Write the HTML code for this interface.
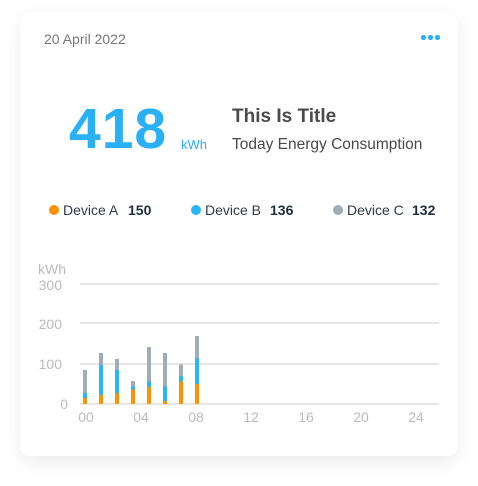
<!DOCTYPE html>
<html><head><style>
body{margin:0;width:478px;height:486px;background:#fff;font-family:"Liberation Sans",Arial,sans-serif;position:relative;overflow:hidden}
.card{position:absolute;left:20px;top:12px;width:438px;height:444px;background:#fff;border-radius:10px;box-shadow:0 6px 18px rgba(0,0,0,0.08)}
.t{position:absolute;white-space:nowrap}
.lg{position:absolute;top:202px;line-height:16px;font-size:14px;white-space:nowrap;color:#2f3a4a}
.lg b{color:#1f2d40;position:absolute;top:0}
.dot{position:absolute;width:10px;height:10px;border-radius:50%}
</style></head><body>
<div class="card"></div>
<div class="t" style="left:44px;top:31px;font-size:14px;color:#777">20 April 2022</div>
<div class="dot" style="left:421px;top:35px;width:4.5px;height:4.5px;background:#29b0f5"></div>
<div class="dot" style="left:428px;top:35px;width:4.5px;height:4.5px;background:#29b0f5"></div>
<div class="dot" style="left:435px;top:35px;width:4.5px;height:4.5px;background:#29b0f5"></div>
<div class="t" style="left:69px;top:96px;font-size:57px;font-weight:bold;color:#29b0f5;letter-spacing:1px">418</div>
<div class="t" style="left:181px;top:137px;font-size:13px;color:#29b0f5">kWh</div>
<div class="t" style="left:232px;top:106px;font-size:19px;font-weight:bold;color:#4a4a4a">This Is Title</div>
<div class="t" style="left:232px;top:136px;font-size:15.5px;color:#4a4a4a">Today Energy Consumption</div>
<div class="dot" style="left:49px;top:205px;background:#fb9305"></div>
<div class="lg" style="left:63px">Device A<b style="left:65px">150</b></div>
<div class="dot" style="left:191px;top:205px;background:#29b6f6"></div>
<div class="lg" style="left:205px">Device B<b style="left:65px">136</b></div>
<div class="dot" style="left:333px;top:205px;background:#a0acb8"></div>
<div class="lg" style="left:347px">Device C<b style="left:65px">132</b></div>
<svg width="478" height="486" style="position:absolute;left:0;top:0" font-family="Liberation Sans, Arial, sans-serif">
<g stroke="#ddd" stroke-width="1.5">
<line x1="80" x2="439" y1="284" y2="284"/><line x1="80" x2="439" y1="323" y2="323"/><line x1="80" x2="439" y1="364" y2="364"/><line x1="80" x2="439" y1="404" y2="404"/></g>
<g fill="#bbb" font-size="14">
<text x="38" y="274">kWh</text>
<g text-anchor="end"><text x="62" y="290">300</text><text x="62" y="329">200</text><text x="62" y="369">100</text><text x="68" y="409">0</text></g>
<g text-anchor="middle"><text x="86" y="422">00</text><text x="141" y="422">04</text><text x="196" y="422">08</text><text x="251" y="422">12</text><text x="306" y="422">16</text><text x="361" y="422">20</text><text x="416" y="422">24</text></g>
</g>
<g>
<rect x="83" y="370" width="4" height="34" fill="#a0acb8"/><rect x="83" y="393" width="4" height="11" fill="#29b6f6"/><rect x="83" y="398" width="4" height="6" fill="#fb9305"/>
<rect x="99" y="353" width="4" height="51" fill="#a0acb8"/><rect x="99" y="365" width="4" height="39" fill="#29b6f6"/><rect x="99" y="395" width="4" height="9" fill="#fb9305"/>
<rect x="115" y="359" width="4" height="45" fill="#a0acb8"/><rect x="115" y="370" width="4" height="34" fill="#29b6f6"/><rect x="115" y="393" width="4" height="11" fill="#fb9305"/>
<rect x="131" y="381" width="4" height="23" fill="#a0acb8"/><rect x="131" y="386.5" width="4" height="17.5" fill="#29b6f6"/><rect x="131" y="389.5" width="4" height="14.5" fill="#fb9305"/>
<rect x="147" y="347" width="4" height="57" fill="#a0acb8"/><rect x="147" y="381.5" width="4" height="22.5" fill="#29b6f6"/><rect x="147" y="387" width="4" height="17" fill="#fb9305"/>
<rect x="163" y="353" width="4" height="51" fill="#a0acb8"/><rect x="163" y="386.5" width="4" height="17.5" fill="#29b6f6"/><rect x="163" y="401" width="4" height="3" fill="#fb9305"/>
<rect x="179" y="364.5" width="4" height="39.5" fill="#a0acb8"/><rect x="179" y="376" width="4" height="28" fill="#29b6f6"/><rect x="179" y="381.5" width="4" height="22.5" fill="#fb9305"/>
<rect x="195" y="336" width="4" height="68" fill="#a0acb8"/><rect x="195" y="358.5" width="4" height="45.5" fill="#29b6f6"/><rect x="195" y="384" width="4" height="20" fill="#fb9305"/>
</g>
</svg>
</body></html>
